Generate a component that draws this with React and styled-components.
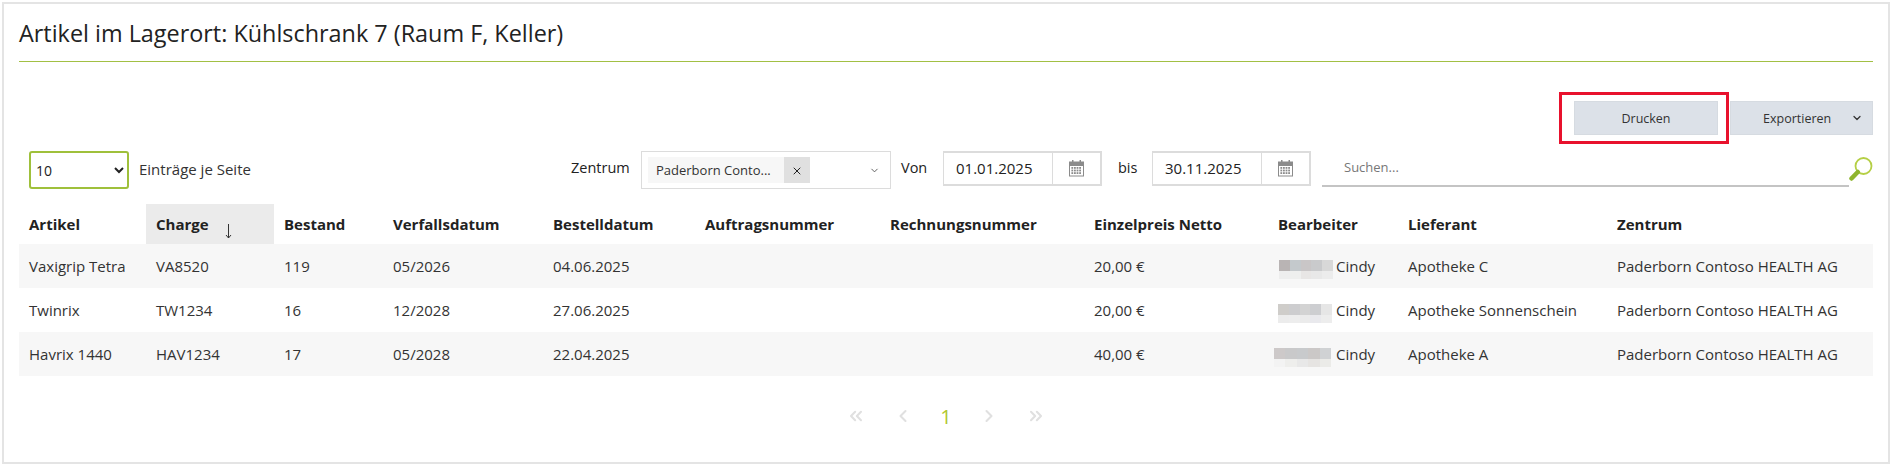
import React from "react";
import styled, { createGlobalStyle } from "styled-components";
import { ChevronDown, ChevronLeft, ChevronRight, ChevronsLeft, ChevronsRight, X } from "lucide-react";

const GlobalStyle = createGlobalStyle`
  html, body {
    margin: 0;
    padding: 0;
    background: #fff;
    font-family: "Open Sans", "Noto Sans", "Liberation Sans", sans-serif;
    font-size: 15px;
    color: #2b2b2b;
  }
  * { box-sizing: border-box; }
`;

const Panel = styled.div`
  margin: 2px 6px 0 2px;
  height: 462px;
  border: 2px solid #e4e4e4;
  padding: 0 15px;
`;

const Title = styled.h1`
  margin: 0;
  height: 58px;
  padding-top: 12px;
  border-bottom: 1px solid #a2c044;
  font-size: 23.4px;
  line-height: 34px;
  font-weight: 500;
  color: #222;
`;

const ButtonBar = styled.div`
  margin-top: 39px;
  display: flex;
  justify-content: flex-end;
  gap: 12px;
`;

const ActionButton = styled.button`
  position: relative;
  height: 34px;
  width: ${(props) => props.$width}px;
  display: flex;
  align-items: center;
  justify-content: ${(props) => (props.$dropdown ? "flex-start" : "center")};
  gap: 20px;
  padding: ${(props) => (props.$dropdown ? "0 0 0 32px" : "0")};
  background: #dce1e8;
  border: 1px solid #d6dbe1;
  color: #333;
  font: inherit;
  font-size: 12.5px;

  ${(props) =>
    props.$marked &&
    `&::after {
      content: "";
      position: absolute;
      top: -10px;
      bottom: -10px;
      left: -16px;
      right: -12px;
      border: 3px solid #e8112d;
    }`}
`;

const FilterRow = styled.div`
  margin-top: 16px;
  display: flex;
  align-items: flex-start;
  height: 38px;
`;

const PageSize = styled.div`
  width: 552px;
  padding-left: 10px;
  display: flex;
  align-items: center;
  gap: 10px;
  height: 38px;
`;

const SizeSelect = styled.select`
  width: 100px;
  height: 38px;
  padding-left: 1px;
  border: 2px solid #9fc03b;
  border-radius: 3px;
  background: #fff;
  font: inherit;
  font-size: 14px;
  color: #222;
  outline: none;
`;

const Label = styled.span`
  padding-bottom: 2px;
  font-size: 15px;
  color: #333;
  white-space: nowrap;
`;

const FilterLabel = styled(Label)`
  width: ${(props) => props.$width}px;
  padding-bottom: 0;
  line-height: 34px;
  padding-left: ${(props) => props.$pad || 0}px;
  font-size: 14.5px;
  color: #222;
`;

const CenterSelect = styled.div`
  width: 250px;
  height: 38px;
  border: 1px solid #dcdcdc;
  padding: 5px 6px;
  display: flex;
  align-items: stretch;
  justify-content: space-between;
`;

const Chip = styled.div`
  display: flex;
  align-items: center;
  width: 162px;
  height: 26px;
  background: #f7f7f7;
  font-size: 13px;
  color: #333;
  white-space: nowrap;
`;

const ChipText = styled.span`
  flex: 1;
  padding-left: 8px;
`;

const ChipClose = styled.span`
  width: 26px;
  height: 26px;
  padding-top: 2px;
  background: #e0e0e0;
  color: #222;
  display: flex;
  align-items: center;
  justify-content: center;
`;

const Caret = styled.span`
  display: flex;
  align-items: center;
  padding-right: 4px;
  color: #555;
`;

const DateBox = styled.div`
  width: 159px;
  height: 35px;
  display: flex;
  border: 1px solid #dcdcdc;
  border-right-width: 2px;
  border-bottom-width: 2px;
  border-top-width: 2px;
`;

const DateValue = styled.div`
  width: 108px;
  padding-left: 12px;
  line-height: 30px;
  font-size: 15px;
  color: #222;
`;

const DateIcon = styled.div`
  flex: 1;
  border-left: 1px solid #dcdcdc;
  display: flex;
  align-items: center;
  justify-content: center;
`;

const SearchWrap = styled.div`
  flex: 1;
  margin-left: 11px;
  display: flex;
  align-items: flex-start;
`;

const SearchField = styled.div`
  flex: 1;
  height: 36px;
  border-bottom: 2px solid #c4c4c4;
  padding-left: 22px;
  line-height: 33px;
  font-size: 13px;
  color: #777;
`;

const SearchIcon = styled.svg`
  width: 24px;
  height: 26px;
  margin-top: 5px;
`;

const Table = styled.table`
  margin-top: 15px;
  width: 1854px;
  table-layout: fixed;
  border-collapse: collapse;
`;

const Th = styled.th`
  height: 40px;
  padding: 0 0 0 10px;
  text-align: left;
  font-size: 15px;
  font-weight: 700;
  color: #222;
  white-space: nowrap;
  background: ${(props) => (props.$sorted ? "#ebebeb" : "transparent")};
`;

const SortArrow = styled.svg`
  width: 7px;
  height: 15px;
  margin-left: 16px;
  margin-bottom: -9px;
`;

const Row = styled.tr`
  height: 44px;
  background: ${(props) => (props.$odd ? "#f7f7f7" : "#fff")};
`;

const Td = styled.td`
  padding: 0 0 0 10px;
  font-size: 15px;
  color: #333;
  white-space: nowrap;
`;

const EditorCell = styled.div`
  display: flex;
  align-items: center;
`;

const BlurSlot = styled.div`
  width: 55px;
  margin-top: 7px;
  display: flex;
  justify-content: flex-end;
`;

const Blur = styled.div`
  flex: none;
  margin-right: ${(props) => props.$trail}px;
  display: grid;
  grid-template-columns: repeat(${(props) => props.$cols}, ${(props) => props.$cell}px);
  grid-template-rows: 11px 8px;
`;

const Name = styled.span`
  margin-left: 3px;
`;

const Pagination = styled.div`
  margin-top: 28px;
  height: 24px;
  display: flex;
  align-items: center;
  justify-content: center;
  gap: 27px;
  color: #e0e0e0;
`;

const PageNumber = styled.span`
  font-size: 20px;
  color: #afc72f;
`;

const CalendarIcon = () => (
  <svg width="15" height="17" viewBox="0 0 15 17">
    <rect x="0" y="1.5" width="15" height="15" fill="#8b8b8b" />
    <rect x="1" y="6" width="13" height="9.5" fill="#fff" />
    <rect x="3" y="0" width="1.5" height="3" fill="#8b8b8b" />
    <rect x="10.5" y="0" width="1.5" height="3" fill="#8b8b8b" />
    {[7, 9.6, 12.2].map((y) =>
      [2.4, 5, 7.6, 10.2].map((x) => (
        <rect key={x + "-" + y} x={x} y={y} width="1.8" height="1.8" fill="#8b8b8b" />
      ))
    )}
  </svg>
);

const columns = [127, 128, 109, 160, 152, 185, 204, 184, 130, 209, 266];

const headers = [
  "Artikel",
  "Charge",
  "Bestand",
  "Verfallsdatum",
  "Bestelldatum",
  "Auftragsnummer",
  "Rechnungsnummer",
  "Einzelpreis Netto",
  "Bearbeiter",
  "Lieferant",
  "Zentrum",
];

const rows = [
  {
    article: "Vaxigrip Tetra",
    charge: "VA8520",
    stock: "119",
    expiry: "05/2026",
    ordered: "04.06.2025",
    price: "20,00 €",
    supplier: "Apotheke C",
    cell: 10.8,
    trail: 0,
    blur: ["#b9b4b4", "#c4c9cc", "#c9c6c7", "#c9cacc", "#d8d8d8", "#eeeeee", "#eeefee", "#e8e6e5", "#e8e8e8", "#ececec"],
  },
  {
    article: "Twinrix",
    charge: "TW1234",
    stock: "16",
    expiry: "12/2028",
    ordered: "27.06.2025",
    price: "20,00 €",
    supplier: "Apotheke Sonnenschein",
    cell: 10.8,
    trail: 1,
    blur: ["#cfcdca", "#cdcdcf", "#d3d3d3", "#cdced1", "#e6e6e6", "#ececec", "#ededed", "#ebebeb", "#e9e9ed", "#ededed"],
  },
  {
    article: "Havrix 1440",
    charge: "HAV1234",
    stock: "17",
    expiry: "05/2028",
    ordered: "22.04.2025",
    price: "40,00 €",
    supplier: "Apotheke A",
    cell: 11.4,
    trail: 2,
    blur: ["#cdc9c9", "#c9c9ca", "#c8cacc", "#cbc8c7", "#d0d2d4", "#f3f3f3", "#eeeeec", "#e8e8e8", "#e6e4e2", "#ebebe8"],
  },
];

const App = () => (
  <>
    <GlobalStyle />
    <Panel>
      <Title>Artikel im Lagerort: Kühlschrank 7 (Raum F, Keller)</Title>

      <ButtonBar>
        <ActionButton $width={144} $marked>Drucken</ActionButton>
        <ActionButton $width={143} $dropdown>
          Exportieren
          <ChevronDown size={12} strokeWidth={2.5} />
        </ActionButton>
      </ButtonBar>

      <FilterRow>
        <PageSize>
          <SizeSelect defaultValue="10">
            <option value="10">10</option>
            <option value="25">25</option>
            <option value="50">50</option>
          </SizeSelect>
          <Label>Einträge je Seite</Label>
        </PageSize>
        <FilterLabel $width={70}>Zentrum</FilterLabel>
        <CenterSelect>
          <Chip>
            <ChipText>Paderborn Conto...</ChipText>
            <ChipClose>
              <X size={12} strokeWidth={2} />
            </ChipClose>
          </Chip>
          <Caret>
            <ChevronDown size={11} strokeWidth={2} />
          </Caret>
        </CenterSelect>
        <FilterLabel $width={52} $pad={10}>Von</FilterLabel>
        <DateBox>
          <DateValue>01.01.2025</DateValue>
          <DateIcon><CalendarIcon /></DateIcon>
        </DateBox>
        <FilterLabel $width={50} $pad={16}>bis</FilterLabel>
        <DateBox>
          <DateValue>30.11.2025</DateValue>
          <DateIcon><CalendarIcon /></DateIcon>
        </DateBox>
        <SearchWrap>
          <SearchField>Suchen...</SearchField>
          <SearchIcon viewBox="0 0 24 26">
            <circle cx="14.5" cy="10" r="8" fill="none" stroke="#b5cf45" strokeWidth="1.8" />
            <path d="M8.8 16 L2.5 22.5" stroke="#8fb52e" strokeWidth="4.5" strokeLinecap="round" />
          </SearchIcon>
        </SearchWrap>
      </FilterRow>

      <Table>
        <colgroup>
          {columns.map((width, index) => (
            <col key={index} width={width} />
          ))}
        </colgroup>
        <thead>
          <tr>
            {headers.map((header) => (
              <Th key={header} $sorted={header === "Charge"}>
                {header}
                {header === "Charge" && (
                  <SortArrow viewBox="0 0 7 15">
                    <path d="M3.5 0 V14 M1 11 L3.5 14 L6 11" fill="none" stroke="#333" strokeWidth="1" />
                  </SortArrow>
                )}
              </Th>
            ))}
          </tr>
        </thead>
        <tbody>
          {rows.map((row, index) => (
            <Row key={row.charge} $odd={index % 2 === 0}>
              <Td>{row.article}</Td>
              <Td>{row.charge}</Td>
              <Td>{row.stock}</Td>
              <Td>{row.expiry}</Td>
              <Td>{row.ordered}</Td>
              <Td />
              <Td />
              <Td>{row.price}</Td>
              <Td>
                <EditorCell>
                  <BlurSlot>
                    <Blur $cols={5} $cell={row.cell} $trail={row.trail}>
                      {row.blur.map((color, i) => (
                        <span key={i} style={{ background: color }} />
                      ))}
                    </Blur>
                  </BlurSlot>
                  <Name>Cindy</Name>
                </EditorCell>
              </Td>
              <Td>{row.supplier}</Td>
              <Td>Paderborn Contoso HEALTH AG</Td>
            </Row>
          ))}
        </tbody>
      </Table>

      <Pagination>
        <ChevronsLeft size={20} strokeWidth={2.5} />
        <ChevronLeft size={20} strokeWidth={2.5} />
        <PageNumber>1</PageNumber>
        <ChevronRight size={20} strokeWidth={2.5} />
        <ChevronsRight size={20} strokeWidth={2.5} />
      </Pagination>
    </Panel>
  </>
);

export default App;
